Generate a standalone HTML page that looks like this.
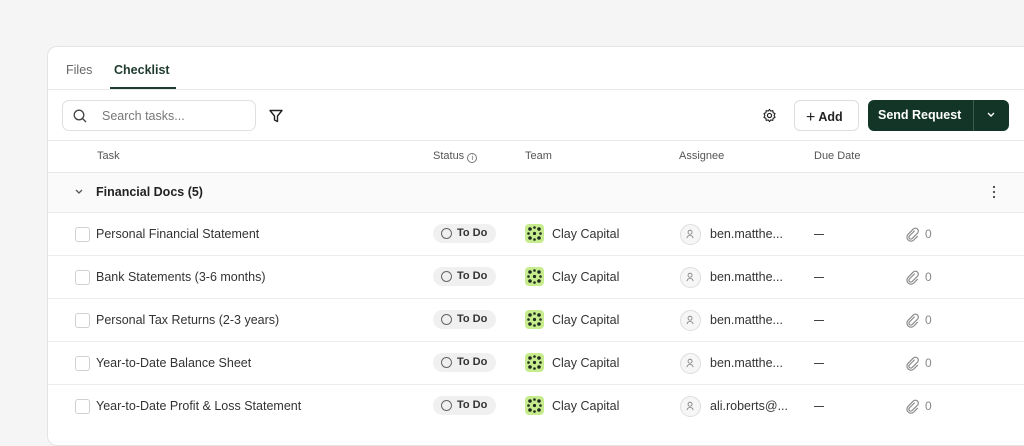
<!DOCTYPE html>
<html><head><style>
*{box-sizing:border-box;margin:0;padding:0}
html,body{width:1024px;height:428px}
body{background:#f5f5f5;font-family:"Liberation Sans",sans-serif;overflow:hidden;position:relative;color:#222}
.card{position:absolute;left:47px;top:46px;width:1000px;height:400px;background:#fff;border:1px solid #e3e3e3;border-radius:10px;overflow:hidden}
.abs{position:absolute}
.line{position:absolute;left:0;right:0;height:1px;background:#e8e8e8}
.tab{position:absolute;top:16px;font-size:12.5px}
.hdr{position:absolute;top:103px;font-size:11px;color:#555}
.row{position:absolute;left:0;right:0;height:43px;border-top:1px solid #ececec}
.cb{position:absolute;left:27px;top:14px;width:15px;height:15px;border:1px solid #d0d0d0;border-radius:3px}
.task{position:absolute;left:48px;top:14px;font-size:12.5px;color:#333}
.pill{position:absolute;left:385px;top:11px;width:63px;height:19px;background:#f0f0f0;border-radius:10px;font-size:11px;font-weight:bold;color:#333;padding:3px 0 0 24px}
.pill:before{content:"";position:absolute;left:8px;top:4px;width:9px;height:9px;border:1px solid #666;border-radius:50%}
.logo{position:absolute;left:477px;top:11px;width:19px;height:19px;background:#c7ec8e;border-radius:4px}
.team{position:absolute;left:504px;top:14px;font-size:12.5px;color:#333}
.av{position:absolute;left:632px;top:11px;width:21px;height:21px;border:1px solid #ddd;background:#f6f6f6;border-radius:50%}
.ass{position:absolute;left:662px;top:14px;font-size:12.5px;color:#333}
.dash{position:absolute;left:766px;top:21px;width:10px;height:1.3px;background:#444}
.att{position:absolute;left:858px;top:14px;font-size:12px;color:#888}
</style></head><body>
<svg width="0" height="0" style="position:absolute"><defs>
<g id="lg"><circle cx="9.5" cy="9.5" r="1.6" fill="#1d2a1e"/><circle cx="5" cy="5" r="1.8" fill="#1d2a1e"/><circle cx="14" cy="5" r="1.8" fill="#1d2a1e"/><circle cx="5" cy="14" r="1.8" fill="#1d2a1e"/><circle cx="14" cy="14" r="1.8" fill="#1d2a1e"/><circle cx="9.5" cy="3.5" r="1.3" fill="#1d2a1e"/><circle cx="9.5" cy="15.5" r="1.3" fill="#1d2a1e"/><circle cx="3.5" cy="9.5" r="1.3" fill="#1d2a1e"/><circle cx="15.5" cy="9.5" r="1.3" fill="#1d2a1e"/></g>
<g id="pp"><circle cx="10" cy="8" r="2.2" fill="none" stroke="#888" stroke-width="1"/><path d="M6.5 14.5c.5-2 2-3 3.5-3s3 1 3.5 3" fill="none" stroke="#888" stroke-width="1"/></g>
<g id="clip"><path d="M10.5 4.5L5 10a2 2 0 0 0 3 3l6-6a3.3 3.3 0 0 0-4.7-4.7L3.5 8.2a4.5 4.5 0 0 0 6.4 6.4L14 10.5" fill="none" stroke="#888" stroke-width="1.3" stroke-linecap="round"/></g>
</defs></svg>
<div class="card">
<div class="tab" style="left:18px;color:#666">Files</div>
<div class="tab" style="left:66px;font-weight:bold;color:#1e3b2e">Checklist</div>
<div class="abs" style="left:62px;top:40px;width:66px;height:2px;background:#1e3b2e"></div>
<div class="line" style="top:42px"></div>
<div class="abs" style="left:14px;top:53px;width:194px;height:31px;border:1px solid #e0e0e0;border-radius:7px">
<svg class="abs" style="left:10px;top:8px" width="14" height="14" viewBox="0 0 14 14"><circle cx="6" cy="6" r="4.8" fill="none" stroke="#444" stroke-width="1.3"/><path d="M9.5 9.5L13 13" stroke="#444" stroke-width="1.3"/></svg>
<div class="abs" style="left:39px;top:8px;font-size:12.5px;color:#777">Search tasks...</div></div>
<svg class="abs" style="left:220px;top:61px" width="16" height="16" viewBox="0 0 16 16"><path d="M2 2.5h12L9.5 8v5.5l-3-1.5V8z" fill="none" stroke="#222" stroke-width="1.4" stroke-linejoin="round"/></svg>
<svg class="abs" style="left:714px;top:61px" width="15" height="15" viewBox="0 0 16 16"><circle cx="8" cy="8" r="2.2" fill="none" stroke="#222" stroke-width="1.3"/><path d="M8 1.5l1.3 1.8 2.2-.5.4 2.2 2 1-1 2 1 2-2 1-.4 2.2-2.2-.5L8 14.5l-1.3-1.8-2.2.5-.4-2.2-2-1 1-2-1-2 2-1 .4-2.2 2.2.5z" fill="none" stroke="#222" stroke-width="1.2" stroke-linejoin="round"/></svg>
<div class="abs" style="left:746px;top:53px;width:65px;height:31px;border:1px solid #ddd;border-radius:6px;font-size:12.5px;font-weight:bold;padding:7px 0 0 11px"><span style="font-weight:normal;font-size:16px;position:relative;top:1px">+</span> Add</div>
<div class="abs" style="left:820px;top:53px;width:141px;height:31px;background:#133527;border-radius:6px;color:#fff;font-size:12.5px;font-weight:bold;padding:8px 0 0 10px">Send Request</div>
<div class="abs" style="left:925px;top:53px;width:1px;height:31px;background:#3d5a4c"></div>
<svg class="abs" style="left:938px;top:64px" width="10" height="8" viewBox="0 0 10 8"><path d="M2 2l3 3 3-3" fill="none" stroke="#fff" stroke-width="1.4"/></svg>
<div class="line" style="top:93px"></div>
<div class="hdr" style="left:49px">Task</div>
<div class="hdr" style="left:385px">Status <span style="display:inline-block;width:10px;height:10px;border:1px solid #777;border-radius:50%;font-size:7px;text-align:center;line-height:9px;vertical-align:-1px">i</span></div>
<div class="hdr" style="left:477px">Team</div>
<div class="hdr" style="left:631px">Assignee</div>
<div class="hdr" style="left:766px">Due Date</div>
<div class="line" style="top:125px"></div>
<div class="abs" style="left:0;right:0;top:126px;height:39px;background:#fafafa"></div>
<svg class="abs" style="left:26px;top:141px" width="10" height="8" viewBox="0 0 10 8"><path d="M2 2l3 3 3-3" fill="none" stroke="#555" stroke-width="1.3"/></svg>
<div class="abs" style="left:48px;top:138px;font-size:12.5px;font-weight:bold;color:#222">Financial Docs (5)</div>
<svg class="abs" style="left:943px;top:138px" width="6" height="14"><circle cx="3" cy="2" r="1.1" fill="#444"/><circle cx="3" cy="7" r="1.1" fill="#444"/><circle cx="3" cy="12" r="1.1" fill="#444"/></svg>
<div class="row" style="top:165px"><div class="cb"></div><div class="task">Personal Financial Statement</div><div class="pill">To Do</div><svg class="logo" viewBox="0 0 19 19"><use href="#lg"/></svg><div class="team">Clay Capital</div><svg class="av" viewBox="0 0 21 21"><use href="#pp"/></svg><div class="ass">ben.matthe...</div><div class="dash"></div><svg class="abs" style="left:857px;top:14px" width="16" height="16" viewBox="0 0 18 18"><use href="#clip"/></svg><div class="att" style="left:877px">0</div></div>
<div class="row" style="top:208px"><div class="cb"></div><div class="task">Bank Statements (3-6 months)</div><div class="pill">To Do</div><svg class="logo" viewBox="0 0 19 19"><use href="#lg"/></svg><div class="team">Clay Capital</div><svg class="av" viewBox="0 0 21 21"><use href="#pp"/></svg><div class="ass">ben.matthe...</div><div class="dash"></div><svg class="abs" style="left:857px;top:14px" width="16" height="16" viewBox="0 0 18 18"><use href="#clip"/></svg><div class="att" style="left:877px">0</div></div>
<div class="row" style="top:251px"><div class="cb"></div><div class="task">Personal Tax Returns (2-3 years)</div><div class="pill">To Do</div><svg class="logo" viewBox="0 0 19 19"><use href="#lg"/></svg><div class="team">Clay Capital</div><svg class="av" viewBox="0 0 21 21"><use href="#pp"/></svg><div class="ass">ben.matthe...</div><div class="dash"></div><svg class="abs" style="left:857px;top:14px" width="16" height="16" viewBox="0 0 18 18"><use href="#clip"/></svg><div class="att" style="left:877px">0</div></div>
<div class="row" style="top:294px"><div class="cb"></div><div class="task">Year-to-Date Balance Sheet</div><div class="pill">To Do</div><svg class="logo" viewBox="0 0 19 19"><use href="#lg"/></svg><div class="team">Clay Capital</div><svg class="av" viewBox="0 0 21 21"><use href="#pp"/></svg><div class="ass">ben.matthe...</div><div class="dash"></div><svg class="abs" style="left:857px;top:14px" width="16" height="16" viewBox="0 0 18 18"><use href="#clip"/></svg><div class="att" style="left:877px">0</div></div>
<div class="row" style="top:337px"><div class="cb"></div><div class="task">Year-to-Date Profit &amp; Loss Statement</div><div class="pill">To Do</div><svg class="logo" viewBox="0 0 19 19"><use href="#lg"/></svg><div class="team">Clay Capital</div><svg class="av" viewBox="0 0 21 21"><use href="#pp"/></svg><div class="ass">ali.roberts@...</div><div class="dash"></div><svg class="abs" style="left:857px;top:14px" width="16" height="16" viewBox="0 0 18 18"><use href="#clip"/></svg><div class="att" style="left:877px">0</div></div>
</div>
</body></html>
